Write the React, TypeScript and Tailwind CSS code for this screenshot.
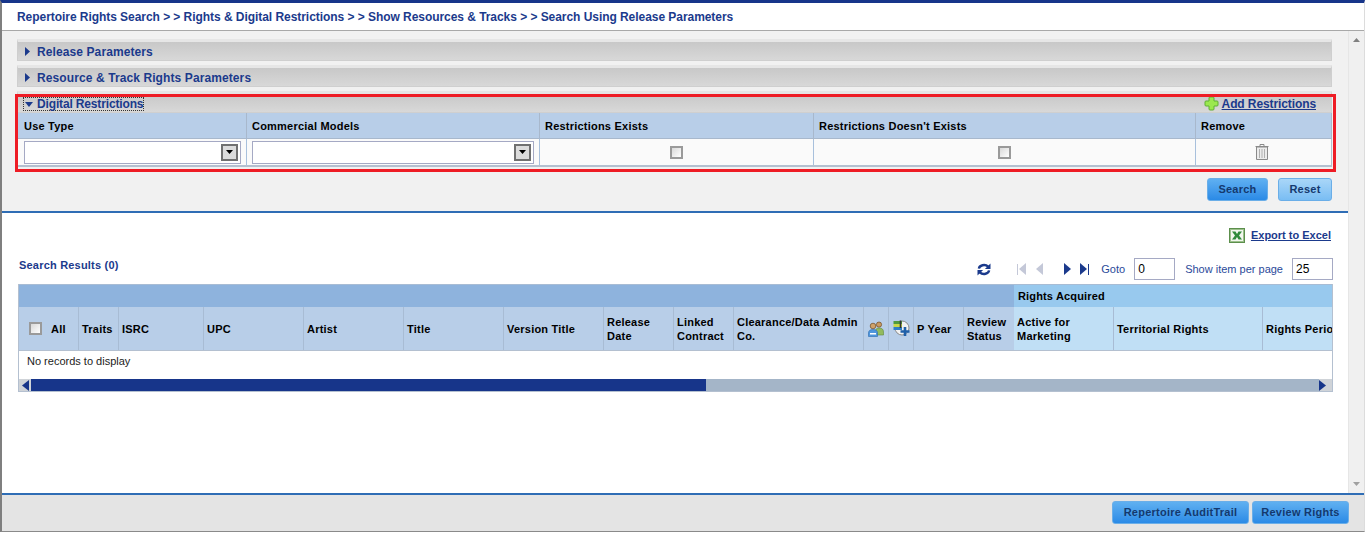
const navy = 'text-[#1b3a8c]'

function AccordionBar({ label }: { label: string }) {
  return (
    <div className="h-[22px] flex items-center pl-[7px] pt-px border border-[#cfcfcf] border-t-[3px] border-t-[#e6e6e6] bg-gradient-to-b from-[#c8c8c8] to-[#d8d8d8]">
      <svg width="5" height="9" viewBox="0 0 5 9">
        <path d="M0 0 L5 4.5 L0 9 Z" fill="#1b3a8c" />
      </svg>
      <span className={`ml-[7px] text-[12px] font-bold tracking-[0.1px] ${navy}`}>{label}</span>
    </div>
  )
}

function BlueButton({ label, light, w }: { label: string; light?: boolean; w: string }) {
  return (
    <button
      className={`h-[23px] ${w} rounded-[3px] border border-[#6aaee8] text-[11px] font-bold tracking-[0.25px] text-[#14396e] ${
        light
          ? 'bg-gradient-to-b from-[#a9d6f8] to-[#79bdf3]'
          : 'bg-gradient-to-b from-[#5fb0f1] to-[#2a8ae6]'
      }`}
    >
      {label}
    </button>
  )
}

function Checkbox() {
  return <span className="block w-[13px] h-[13px] border-2 border-[#9a9a9a] bg-gradient-to-br from-[#d9d9d9] to-white" />
}

function SelectBox({ w }: { w: string }) {
  return (
    <div className={`${w} h-[23px] bg-white border border-[#a5a9c4] flex items-center justify-end pr-[2px]`}>
      <span className="w-[17px] h-[17px] border-2 border-[#707070] bg-[#dcdcdc] flex items-center justify-center">
        <svg width="7" height="4" viewBox="0 0 7 4">
          <path d="M0 0 H7 L3.5 4 Z" fill="#000" />
        </svg>
      </span>
    </div>
  )
}

function PlusIcon() {
  return (
    <svg width="15" height="15" viewBox="0 0 15 15">
      <path
        d="M6 1 H9 Q10 1 10 2 V5 H13 Q14 5 14 6 V9 Q14 10 13 10 H10 V13 Q10 14 9 14 H6 Q5 14 5 13 V10 H2 Q1 10 1 9 V6 Q1 5 2 5 H5 V2 Q5 1 6 1 Z"
        fill="#9be84f"
        stroke="#5fb034"
        strokeWidth="1"
      />
    </svg>
  )
}

function TrashIcon() {
  return (
    <svg width="14" height="16" viewBox="0 0 14 16" fill="none" stroke="#8a8a8a">
      <path d="M0.5 2.5 H13.5 M5 2 V0.5 H9 V2" />
      <path d="M1.5 3 H12.5 V15.5 H1.5 Z" fill="#ececec" />
      <path d="M4.5 5 V14 M7 5 V14 M9.5 5 V14" stroke="#b0b0b0" />
    </svg>
  )
}

function ExcelIcon() {
  return (
    <svg width="16" height="15" viewBox="0 0 16 15">
      <rect x="0.5" y="0.5" width="15" height="14" fill="#dfe9d8" stroke="#5c8f4c" />
      <rect x="1.5" y="1.5" width="13" height="12" fill="#f2f7ee" stroke="#9cc08c" />
      <path d="M3 3.5 H6.5 L8 6 L9.5 3.5 H13 L10 7.5 L13 11.5 H9.5 L8 9 L6.5 11.5 H3 L6 7.5 Z" fill="#2f8a3a" />
    </svg>
  )
}

function PeopleIcon() {
  return (
    <svg width="16" height="16" viewBox="0 0 16 16">
      <circle cx="11" cy="3.6" r="2.6" fill="#c99a62" stroke="#6e4a22" strokeWidth="0.7" />
      <path d="M7 12 Q7 7 11 7 Q15.5 7 15.5 11 V14 H7 Z" fill="#93bb5e" stroke="#5f8a3a" strokeWidth="0.6" />
      <circle cx="5" cy="5" r="2.8" fill="#d0a26a" stroke="#6e4a22" strokeWidth="0.7" />
      <path d="M0.5 12 Q0.5 8.5 5 8.5 Q9.5 8.5 9.5 12 V15.5 H0.5 Z" fill="#4f96dc" stroke="#2a6ab0" strokeWidth="0.6" />
      <rect x="2" y="12" width="6" height="1.5" fill="#fff" />
    </svg>
  )
}

function ClockPlusIcon() {
  return (
    <svg width="17" height="17" viewBox="0 0 17 17">
      <circle cx="9" cy="8" r="7" fill="#f2f2f2" stroke="#8a8a8a" />
      <rect x="0.5" y="1" width="8.5" height="3" fill="#4f9a3f" />
      <rect x="0.5" y="4" width="8.5" height="3" fill="#c9d84a" />
      <rect x="0.5" y="7" width="8.5" height="3" fill="#2f7fc5" />
      <path d="M7.5 0.5 V8" stroke="#333" strokeWidth="1.6" />
      <path d="M12 7 V16 M7.5 11.5 H16.5" stroke="#1f5fa8" strokeWidth="2.6" />
    </svg>
  )
}

function RefreshIcon() {
  return (
    <svg width="14" height="13" viewBox="0 0 15 14" fill="none" stroke="#1b3a8c" strokeWidth="2.6">
      <path d="M2 6 C2.5 2.5 8.5 0.5 12 4" />
      <path d="M13 8 C12.5 11.5 6.5 13.5 3 10" />
      <path d="M14.5 0.5 V6.5 H8.5 Z M0.5 13.5 V7.5 H6.5 Z" fill="#1b3a8c" stroke="none" />
    </svg>
  )
}

function Triangle({ dir, fill }: { dir: 'left' | 'right'; fill: string }) {
  return (
    <svg width="7" height="12" viewBox="0 0 7 12">
      <path d={dir === 'right' ? 'M0 0 L7 6 L0 12 Z' : 'M7 0 L0 6 L7 12 Z'} fill={fill} />
    </svg>
  )
}

const restrictionCols = 'grid grid-cols-[229px_293px_274px_382px_135px]'

const blueHeads: { w: string; label: string }[] = [
  { w: 'w-[40px]', label: 'Traits' },
  { w: 'w-[85px]', label: 'ISRC' },
  { w: 'w-[100px]', label: 'UPC' },
  { w: 'w-[100px]', label: 'Artist' },
  { w: 'w-[100px]', label: 'Title' },
  { w: 'w-[100px]', label: 'Version Title' },
  { w: 'w-[70px]', label: 'Release Date' },
  { w: 'w-[60px]', label: 'Linked Contract' },
  { w: 'w-[130px]', label: 'Clearance/Data Admin Co.' },
]

export default function App() {
  return (
    <div className="w-[1365px] h-[532px] overflow-hidden flex flex-col bg-white font-['Liberation_Sans',Arial,sans-serif] text-[11px] text-black border-t-[3px] border-t-[#17358a] border-l-2 border-l-[#7f7f7f] border-r border-r-[#dcdcdc] border-b border-b-[#8a8a8a]">
      {/* Fil d'ariane */}
      <div className={`h-[28px] shrink-0 flex items-center pl-[15px] pt-px text-[12px] font-bold tracking-[-0.05px] border-b border-[#a8a8a8] ${navy}`}>
        Repertoire Rights Search &gt; &gt; Rights &amp; Digital Restrictions &gt; &gt; Show Resources &amp; Tracks &gt; &gt; Search Using Release Parameters
      </div>

      <div className="flex-1 min-h-0 flex">
        <div className="w-[1346px] shrink-0 flex flex-col">
          {/* Filtres */}
          <div className="h-[182px] shrink-0 bg-[#f1f1f1] pt-[8px] pl-[15px] pr-[16px] flex flex-col border-b-2 border-[#2f6db5]">
            <AccordionBar label="Release Parameters" />
            <div className="h-[4px] shrink-0" />
            <AccordionBar label="Resource & Track Rights Parameters" />
            <div className="h-[4px] shrink-0" />

            <div className="relative">
              <div className="h-[22px] flex items-center pl-[5px] border border-[#cfcfcf] border-t-[3px] border-t-[#e6e6e6] bg-gradient-to-b from-[#c8c8c8] to-[#d8d8d8]">
                <span className={`flex items-center gap-[4px] h-[14px] border border-dotted border-[#333] text-[12px] font-bold tracking-[-0.15px] mt-[2px] ${navy}`}>
                  <svg width="8" height="5" viewBox="0 0 8 5" className="ml-px">
                    <path d="M0 0 H8 L4 5 Z" fill="#1b3a8c" />
                  </svg>
                  Digital Restrictions
                </span>
                <span className="ml-auto mr-[15px] mt-[1px] flex items-center gap-[3px]">
                  <PlusIcon />
                  <a className={`text-[12px] font-bold underline tracking-[-0.1px] ${navy}`}>Add Restrictions</a>
                </span>
              </div>
              <div className={`${restrictionCols} h-[26px] bg-[#b8cee8] border-x border-b border-[#a8b8cc] text-[11px] font-bold tracking-[0.22px]`}>
                {['Use Type', 'Commercial Models', 'Restrictions Exists', "Restrictions Doesn't Exists", 'Remove'].map((t) => (
                  <div key={t} className="flex items-center pl-[5px] pt-[2px] first:pl-[6px] border-r border-[#a8b8cc] last:border-r-0">
                    {t}
                  </div>
                ))}
              </div>
              <div className={`${restrictionCols} h-[28px] bg-[#fafafa] border-x border-b-2 border-[#b4c0d0]`}>
                <div className="flex items-center pl-[6px] border-r border-[#a8c0dc]">
                  <SelectBox w="w-[217px]" />
                </div>
                <div className="flex items-center pl-[5px] border-r border-[#a8c0dc]">
                  <SelectBox w="w-[282px]" />
                </div>
                <div className="flex items-center justify-center border-r border-[#a8c0dc]">
                  <Checkbox />
                </div>
                <div className="flex items-center justify-center border-r border-[#a8c0dc]">
                  <Checkbox />
                </div>
                <div className="flex items-center justify-center pr-[4px]">
                  <TrashIcon />
                </div>
              </div>
              {/* Cadre rouge */}
              <div className="absolute left-[-2px] right-[-4px] top-[3px] bottom-[-5px] border-[3px] border-[#ee1c25] pointer-events-none" />
            </div>

            <div className="flex justify-end gap-[10px] mt-[11px]">
              <BlueButton label="Search" w="w-[61px]" />
              <BlueButton label="Reset" light w="w-[54px]" />
            </div>
          </div>

          {/* Resultats */}
          <div className="flex-1 min-h-0 pl-[15px] pr-[16px] flex flex-col">
            <div className="h-[34px] shrink-0 flex items-end justify-end pb-[4px] pr-[1px] gap-[6px]">
              <ExcelIcon />
              <a className={`text-[11px] font-bold underline leading-[15px] ${navy}`}>Export to Excel</a>
            </div>

            <div className="h-[37px] shrink-0 flex items-center pt-[7px] mr-[-1px]">
              <span className={`ml-[2px] text-[11px] font-bold tracking-[0.2px] mt-[-8px] ${navy}`}>Search Results (0)</span>
              <div className="ml-auto flex items-center">
                <RefreshIcon />
                <span className="ml-[26px] flex items-center gap-px">
                  <span className="w-px h-[11px] bg-[#c4c8d8]" />
                  <Triangle dir="left" fill="#c4c8d8" />
                </span>
                <span className="ml-[10px] flex items-center">
                  <Triangle dir="left" fill="#c4c8d8" />
                </span>
                <span className="ml-[21px] flex items-center">
                  <Triangle dir="right" fill="#1b3a8c" />
                </span>
                <span className="ml-[9px] flex items-center gap-px">
                  <Triangle dir="right" fill="#1b3a8c" />
                  <span className="w-px h-[11px] bg-[#1b3a8c]" />
                </span>
                <span className="text-[#2a4a9a] ml-[12px]">Goto</span>
                <span className="ml-[9px] w-[41px] h-[22px] border border-[#a5a9c4] bg-white text-[12px] pl-[3px] leading-[20px]">0</span>
                <span className="ml-[10px] text-[#2a4a9a]">Show item per page</span>
                <span className="ml-[9px] w-[41px] h-[22px] border border-[#a5a9c4] bg-white text-[12px] pl-[3px] leading-[20px]">25</span>
              </div>
            </div>

            {/* Tableau */}
            <div className="w-[1315px] ml-px h-[108px] shrink-0 border-x border-[#b4c0d0] border-b border-b-[#b4c0d0] overflow-hidden">
              <div className="flex h-[23px] font-bold tracking-[0.15px]">
                <div className="w-[995px] bg-[#8eb3dd] border-t border-[#a8bcd4]" />
                <div className="flex-1 bg-[#98c9ee] flex items-center pl-[4px] border-t border-[#a8bcd4]">Rights Acquired</div>
              </div>
              <div className="flex h-[44px] font-bold tracking-[0.22px] border-b border-[#b4c0d0] leading-[14px] whitespace-nowrap">
                <div className="w-[60px] shrink-0 bg-[#b8cee8] border-r border-[#a8bcd4] flex items-center pl-[10px] gap-[9px]">
                  <Checkbox />
                  All
                </div>
                {blueHeads.map((h) => (
                  <div key={h.label} className={`${h.w} shrink-0 bg-[#b8cee8] border-r border-[#a8bcd4] flex items-center px-[3px] whitespace-normal`}>
                    {h.label}
                  </div>
                ))}
                <div className="w-[25px] shrink-0 bg-[#b8cee8] border-r border-[#a8bcd4] flex items-center justify-center">
                  <PeopleIcon />
                </div>
                <div className="w-[25px] shrink-0 bg-[#b8cee8] border-r border-[#a8bcd4] flex items-center justify-center">
                  <ClockPlusIcon />
                </div>
                <div className="w-[50px] shrink-0 bg-[#b8cee8] border-r border-[#a8bcd4] flex items-center px-[3px]">P Year</div>
                <div className="w-[50px] shrink-0 bg-[#b8cee8] flex items-center px-[3px] whitespace-normal">Review Status</div>
                <div className="w-[100px] shrink-0 bg-[#c0dff5] border-r border-[#a8bcd4] flex items-center px-[3px] whitespace-normal">Active for Marketing</div>
                <div className="w-[149px] shrink-0 bg-[#c0dff5] border-r border-[#a8bcd4] flex items-center px-[3px]">Territorial Rights</div>
                <div className="flex-1 min-w-0 overflow-hidden bg-[#c0dff5] flex items-center pl-[3px]">Rights Period</div>
              </div>
              <div className="h-[28px] bg-white pl-[8px] pt-[3px] leading-[15px] text-[#222]">No records to display</div>
              <div className="h-[12px] flex bg-[#a4b5c8]">
                <div className="w-[12px] bg-[#cfd3d8] flex items-center justify-center">
                  <svg width="7" height="11" viewBox="0 0 7 11"><path d="M7 0 L0 5.5 L7 11 Z" fill="#17358a" /></svg>
                </div>
                <div className="w-[675px] bg-[#17358a]" />
                <div className="ml-auto w-[13px] bg-[#cfd3d8] flex items-center justify-start">
                  <svg width="7" height="11" viewBox="0 0 7 11"><path d="M0 0 L7 5.5 L0 11 Z" fill="#17358a" /></svg>
                </div>
              </div>
            </div>
          </div>
        </div>

        {/* Barre de defilement */}
        <div className="w-[16px] shrink-0 bg-[#f0f0f0] border-l border-[#e6e6e6] flex flex-col justify-between items-center pt-[7px] pb-[7px]">
          <svg width="7" height="4" viewBox="0 0 7 4"><path d="M3.5 0 L7 4 H0 Z" fill="#808080" /></svg>
          <svg width="7" height="4" viewBox="0 0 7 4"><path d="M0 0 H7 L3.5 4 Z" fill="#a0a0a0" /></svg>
        </div>
      </div>

      {/* Pied */}
      <div className="h-[38px] shrink-0 border-t-2 border-[#2f6db5] bg-[#e4e4e4] flex items-center justify-end pr-[15px] pb-px gap-[3px]">
        <BlueButton label="Repertoire AuditTrail" w="w-[137px]" />
        <BlueButton label="Review Rights" w="w-[97px]" />
      </div>
    </div>
  )
}
